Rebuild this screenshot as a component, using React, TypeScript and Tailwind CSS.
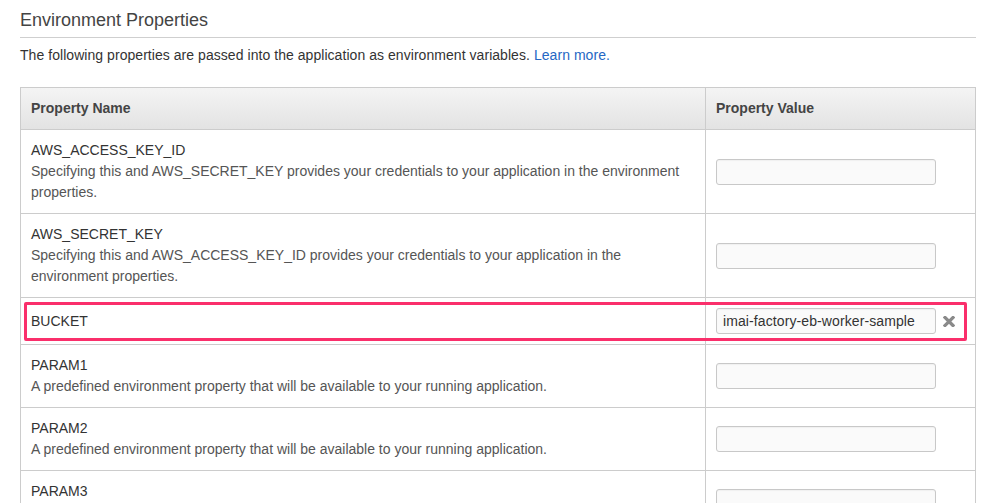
import React from "react";

type Row = { name: string; desc?: string[]; value?: string; highlight?: boolean };

const rows: Row[] = [
  {
    name: "AWS_ACCESS_KEY_ID",
    desc: [
      "Specifying this and AWS_SECRET_KEY provides your credentials to your application in the environment",
      "properties.",
    ],
  },
  {
    name: "AWS_SECRET_KEY",
    desc: [
      "Specifying this and AWS_ACCESS_KEY_ID provides your credentials to your application in the",
      "environment properties.",
    ],
  },
  { name: "BUCKET", value: "imai-factory-eb-worker-sample", highlight: true },
  { name: "PARAM1", desc: ["A predefined environment property that will be available to your running application."] },
  { name: "PARAM2", desc: ["A predefined environment property that will be available to your running application."] },
  { name: "PARAM3", desc: ["A predefined environment property that will be available to your running application."] },
];

function XIcon() {
  return (
    <svg width="12" height="11" viewBox="0 0 12 11" className="shrink-0">
      <path d="M2 1.5 L10 9.5 M10 1.5 L2 9.5" stroke="#8a8a8a" strokeWidth="3.2" strokeLinecap="square" />
    </svg>
  );
}

export default function App() {
  return (
    <div
      className="w-[984px] h-[503px] overflow-hidden bg-white pl-[20px] text-[#333]"
      style={{ fontFamily: '"Liberation Sans", Arial, sans-serif' }}
    >
      <div className="w-[956px]">
        <div className="h-[38px] border-b border-[#cfcfcf] pt-[10px] text-[18px] leading-[20px] text-[#444]">
          Environment Properties
        </div>
        <div className="mt-[7px] text-[14px] leading-[20px] tracking-[0.05px] text-[#333]">
          The following properties are passed into the application as environment variables.{" "}
          <span className="text-[#2567c4]">Learn more.</span>
        </div>
        <div className="mt-[22px] border-x border-t border-[#cccccc]">
          <div className="grid grid-cols-[685px_1fr] border-b border-[#cccccc] bg-gradient-to-b from-[#f4f4f4] to-[#e3e3e3] text-[14px] font-bold text-[#444]">
            <div className="h-[41px] border-r border-[#cccccc] pl-[10px] leading-[41px]">Property Name</div>
            <div className="h-[41px] pl-[10px] leading-[41px]">Property Value</div>
          </div>
          {rows.map((r) => (
            <div
              key={r.name}
              className="relative grid grid-cols-[685px_1fr] border-b border-[#cccccc] text-[14px] leading-[21px]"
            >
              <div className="flex flex-col justify-center border-r border-[#cccccc] px-[10px] py-[10px]">
                <div className="text-[#333]">{r.name}</div>
                {r.desc?.map((d, i) => (
                  <div key={i} className="text-[#555]">
                    {d}
                  </div>
                ))}
              </div>
              <div className="flex items-center gap-[7px] pl-[10px] py-[10px]">
                <div className="h-[26px] w-[220px] rounded-[3px] border border-[#c8c8c8] bg-[#fafafa] px-[6px] text-[14px] leading-[24px] tracking-[0.1px] text-[#333] shadow-[inset_0_1px_1px_rgba(0,0,0,0.04)]">
                  {r.value ?? ""}
                </div>
                {r.value ? <XIcon /> : null}
              </div>
              {r.highlight ? (
                <div className="pointer-events-none absolute left-[3px] top-[4px] h-[39px] w-[943px] rounded-[2px] border-[3px] border-[#fa2f6b]" />
              ) : null}
            </div>
          ))}
        </div>
      </div>
    </div>
  );
}
